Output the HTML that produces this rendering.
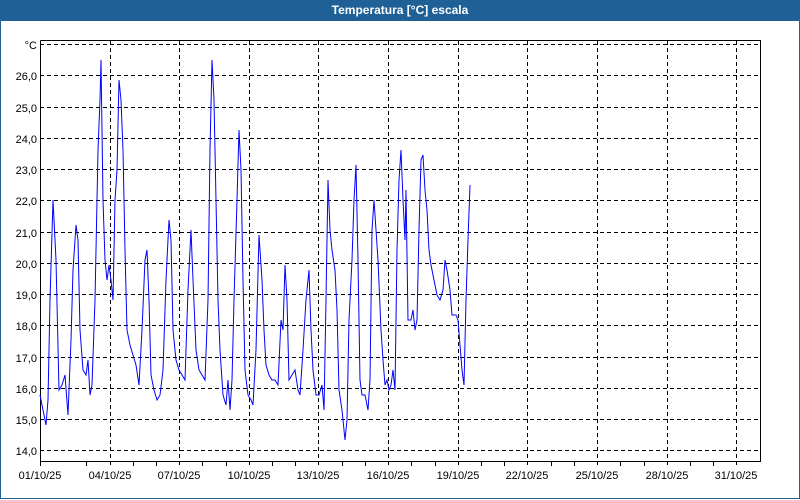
<!DOCTYPE html>
<html><head><style>
html,body{margin:0;padding:0;width:800px;height:500px;overflow:hidden;background:#fff;font-family:"Liberation Sans",Tahoma,sans-serif}
.wrap{position:absolute;left:0;top:0;width:798px;height:498px;border:1px solid #1f6096;border-top:none}
.title{position:absolute;left:0;top:0;width:800px;height:21px;background:#1f6096;color:#fff;font-weight:bold;font-size:12px;line-height:21px;text-align:center}
</style></head><body>
<div class="wrap"></div>
<div class="title">Temperatura [°C] escala</div>
<svg width="800" height="500" style="position:absolute;left:0;top:0" font-family="Liberation Sans, Tahoma, sans-serif" font-size="11">
<g stroke="#000" stroke-width="1" stroke-dasharray="4,3" shape-rendering="crispEdges">
<line x1="40" y1="44.5" x2="760" y2="44.5"/>
<line x1="40" y1="75.5" x2="760" y2="75.5"/>
<line x1="40" y1="107.5" x2="760" y2="107.5"/>
<line x1="40" y1="138.5" x2="760" y2="138.5"/>
<line x1="40" y1="169.5" x2="760" y2="169.5"/>
<line x1="40" y1="200.5" x2="760" y2="200.5"/>
<line x1="40" y1="232.5" x2="760" y2="232.5"/>
<line x1="40" y1="263.5" x2="760" y2="263.5"/>
<line x1="40" y1="294.5" x2="760" y2="294.5"/>
<line x1="40" y1="325.5" x2="760" y2="325.5"/>
<line x1="40" y1="357.5" x2="760" y2="357.5"/>
<line x1="40" y1="388.5" x2="760" y2="388.5"/>
<line x1="40" y1="419.5" x2="760" y2="419.5"/>
<line x1="40" y1="450.5" x2="760" y2="450.5"/>
<line x1="110.5" y1="41" x2="110.5" y2="466"/>
<line x1="179.5" y1="41" x2="179.5" y2="466"/>
<line x1="249.5" y1="41" x2="249.5" y2="466"/>
<line x1="318.5" y1="41" x2="318.5" y2="466"/>
<line x1="388.5" y1="41" x2="388.5" y2="466"/>
<line x1="458.5" y1="41" x2="458.5" y2="466"/>
<line x1="527.5" y1="41" x2="527.5" y2="466"/>
<line x1="597.5" y1="41" x2="597.5" y2="466"/>
<line x1="667.5" y1="41" x2="667.5" y2="466"/>
<line x1="736.5" y1="41" x2="736.5" y2="466"/>
</g>
<g stroke="#000" stroke-width="1" shape-rendering="crispEdges">
<polyline points="40.5,40.5 760.5,40.5 760.5,461.5 40.5,461.5 40.5,40.5" fill="none"/>
<line x1="40.5" y1="461" x2="40.5" y2="466"/>
<line x1="86.5" y1="461" x2="86.5" y2="466"/>
<line x1="133.5" y1="461" x2="133.5" y2="466"/>
<line x1="156.5" y1="461" x2="156.5" y2="466"/>
<line x1="202.5" y1="461" x2="202.5" y2="466"/>
<line x1="226.5" y1="461" x2="226.5" y2="466"/>
<line x1="272.5" y1="461" x2="272.5" y2="466"/>
<line x1="295.5" y1="461" x2="295.5" y2="466"/>
<line x1="342.5" y1="461" x2="342.5" y2="466"/>
<line x1="365.5" y1="461" x2="365.5" y2="466"/>
<line x1="411.5" y1="461" x2="411.5" y2="466"/>
<line x1="435.5" y1="461" x2="435.5" y2="466"/>
<line x1="481.5" y1="461" x2="481.5" y2="466"/>
<line x1="504.5" y1="461" x2="504.5" y2="466"/>
<line x1="551.5" y1="461" x2="551.5" y2="466"/>
<line x1="574.5" y1="461" x2="574.5" y2="466"/>
<line x1="620.5" y1="461" x2="620.5" y2="466"/>
<line x1="644.5" y1="461" x2="644.5" y2="466"/>
<line x1="690.5" y1="461" x2="690.5" y2="466"/>
<line x1="713.5" y1="461" x2="713.5" y2="466"/>
</g>
<g fill="#000" text-anchor="end">
<text x="37" y="49">°C</text>
<text x="37" y="80">26,0</text><text x="37" y="112">25,0</text><text x="37" y="143">24,0</text>
<text x="37" y="174">23,0</text><text x="37" y="205">22,0</text><text x="37" y="237">21,0</text>
<text x="37" y="268">20,0</text><text x="37" y="299">19,0</text><text x="37" y="330">18,0</text>
<text x="37" y="362">17,0</text><text x="37" y="393">16,0</text><text x="37" y="424">15,0</text>
<text x="37" y="455">14,0</text>
</g>
<g fill="#000" text-anchor="middle">
<text x="40" y="479">01/10/25</text><text x="110" y="479">04/10/25</text><text x="179" y="479">07/10/25</text>
<text x="249" y="479">10/10/25</text><text x="318" y="479">13/10/25</text><text x="388" y="479">16/10/25</text>
<text x="458" y="479">19/10/25</text><text x="527" y="479">22/10/25</text><text x="597" y="479">25/10/25</text>
<text x="667" y="479">28/10/25</text><text x="736" y="479">31/10/25</text>
</g>
<polyline fill="none" stroke="#0000ff" stroke-width="1" points="40,395 43,410 46,425 48,400 50,300 53,200 56,260 59,390 62,385 65,375 68,415 71,340 73,270 76,225 78,240 80,330 83,370 86,375 88,360 90,395 92,385 95,300 98,150 100,100 101,60 103,200 105,260 107,280 109,265 111,280 113,300 115,200 117,170 119,80 121,100 123,150 125,250 127,330 130,345 133,355 136,365 139,385 142,330 145,260 147,250 149,300 151,375 154,390 157,400 160,395 163,370 166,280 169,220 171,240 173,330 176,360 179,370 182,375 185,380 188,290 191,230 193,280 196,350 199,370 202,375 205,380 208,300 210,150 212,60 214,100 216,200 218,300 220,350 223,395 226,405 228,380 230,410 232,380 234,300 237,200 239,130 241,170 243,280 245,370 248,395 251,400 253,405 256,350 259,235 262,280 264,330 266,365 269,375 272,380 275,380 278,385 281,320 283,330 285,265 287,300 289,380 292,375 295,370 298,390 300,395 303,350 306,300 309,270 311,330 313,370 316,395 319,395 322,385 324,410 326,300 328,180 330,230 332,250 335,270 337,310 339,390 342,410 345,440 347,420 349,320 352,260 354,200 356,165 358,260 360,380 362,395 365,395 368,410 370,380 372,230 374,200 376,230 378,260 381,330 383,360 385,385 387,380 389,390 391,385 393,370 395,390 397,250 399,180 401,150 403,200 405,240 406,190 408,320 411,320 413,310 415,330 417,320 419,230 421,160 423,155 425,190 427,210 429,250 431,265 434,280 437,295 440,300 443,290 445,260 447,270 450,290 452,315 456,315 458,320 460,345 462,370 464,385 466,300 468,240 470,185"/>
</svg>
</body></html>
